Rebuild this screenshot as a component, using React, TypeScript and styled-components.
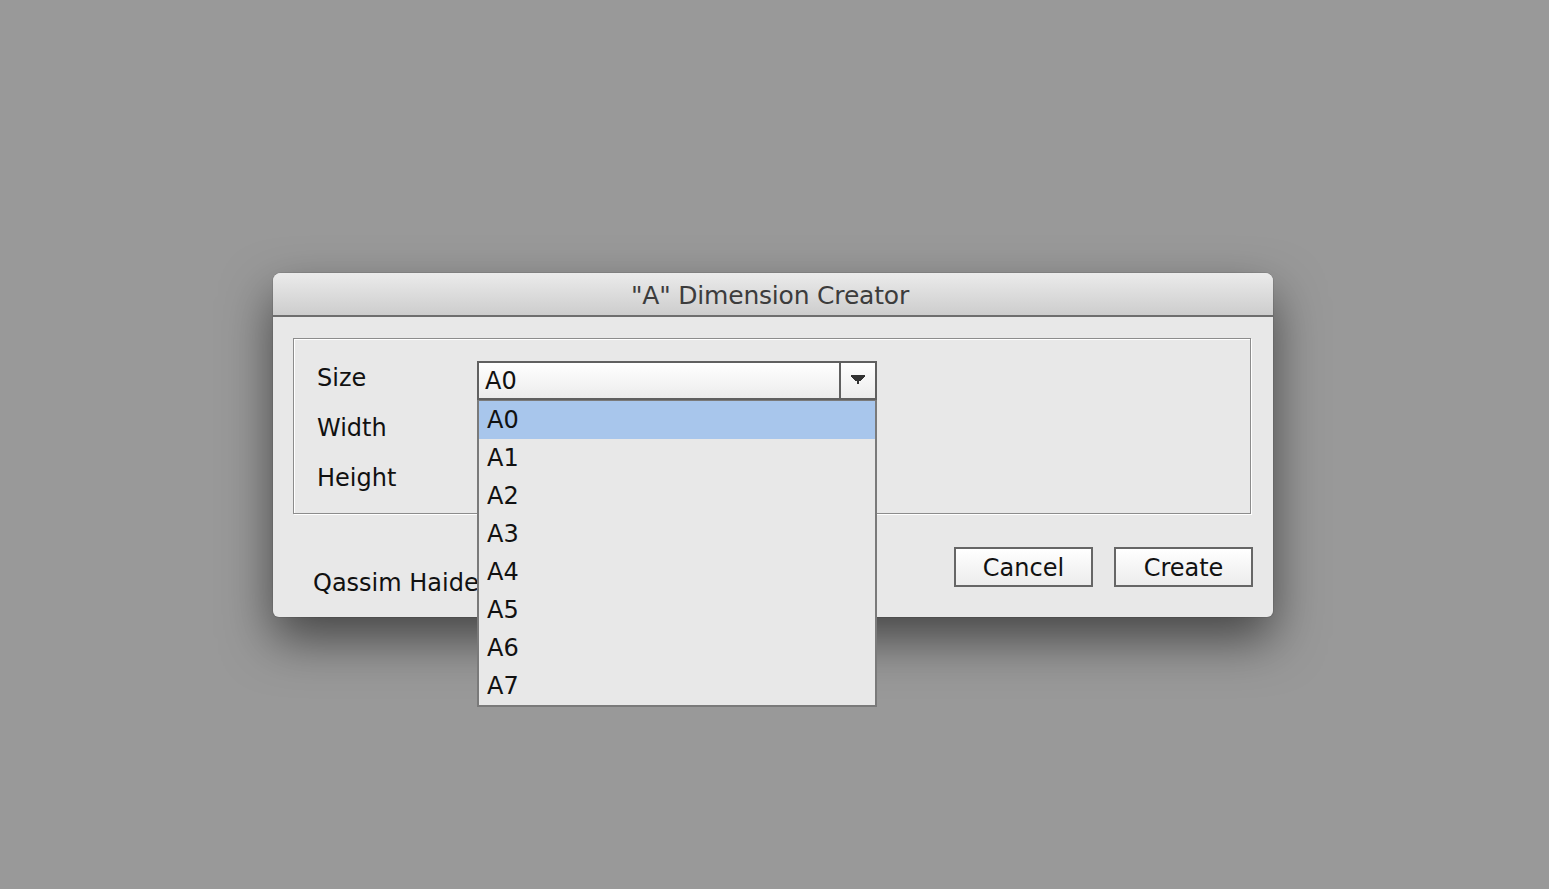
import { FC } from "react";
import styled, { createGlobalStyle } from "styled-components";

const GlobalStyle = createGlobalStyle`
  html, body {
    margin: 0;
    padding: 0;
    background: #999999;
    font-family: "DejaVu Sans", "Liberation Sans", sans-serif;
  }
`;

const sizes = ["A0", "A1", "A2", "A3", "A4", "A5", "A6", "A7"];

export const App: FC = () => {
  return (
    <Page>
      <GlobalStyle />
      <Dialog>
        <TitleBar>"A" Dimension Creator</TitleBar>
        <Body>
          <GroupBox>
            <FieldRow>
              <Label>Size</Label>
              <ComboWrap>
                <Combo>
                  <ComboValue>A0</ComboValue>
                  <ComboButton>
                    <svg width="14" height="9" viewBox="0 0 14 9">
                      <path
                        d="M0 0h14v2h-1v1h-1v1h-1v1h-1v1H8v3H6V6H4V5H3V4H2V3H1V2H0z"
                        fill="#333"
                      />
                    </svg>
                  </ComboButton>
                </Combo>
                <List>
                  {sizes.map((s, i) => (
                    <ListItem key={s} $selected={i === 0}>
                      {s}
                    </ListItem>
                  ))}
                </List>
              </ComboWrap>
            </FieldRow>
            <FieldRow>
              <Label>Width</Label>
            </FieldRow>
            <FieldRow>
              <Label>Height</Label>
            </FieldRow>
          </GroupBox>
          <Footer>
            <Author>Qassim Haider</Author>
            <Buttons>
              <Button>Cancel</Button>
              <Button>Create</Button>
            </Buttons>
          </Footer>
        </Body>
      </Dialog>
    </Page>
  );
};

export default App;

const Page = styled.div`
  width: 1549px;
  height: 889px;
  display: flex;
  justify-content: center;
  align-items: flex-start;
  padding-top: 273px;
  box-sizing: border-box;
`;

const Dialog = styled.div`
  width: 1000px;
  height: 344px;
  margin-right: 3px;
  background: #e8e8e8;
  border-radius: 8px 8px 6px 6px;
  box-shadow: 0 22px 50px rgba(0, 0, 0, 0.55), 0 0 0 1px rgba(0, 0, 0, 0.08);
  display: flex;
  flex-direction: column;
`;

const TitleBar = styled.div`
  height: 44px;
  box-sizing: border-box;
  padding-top: 2px;
  padding-right: 6px;
  border-radius: 8px 8px 0 0;
  background: linear-gradient(#ebebeb, #cdcdcd);
  border-bottom: 2px solid #6e6e6e;
  display: flex;
  align-items: center;
  justify-content: center;
  font-size: 25px;
  letter-spacing: -0.2px;
  color: #3c3c3c;
`;

const Body = styled.div`
  flex: 1;
  display: flex;
  flex-direction: column;
  padding: 21px 22px 0 20px;
`;

const GroupBox = styled.div`
  height: 176px;
  border: 1px solid #8c8c8c;
  box-shadow: inset 1px 1px 0 #ffffff, 1px 1px 0 #ffffff;
  padding: 22px 0 0 23px;
  box-sizing: border-box;
  display: flex;
  flex-direction: column;
`;

const FieldRow = styled.div`
  height: 50px;
  display: flex;
  align-items: flex-start;
`;

const Label = styled.div`
  width: 160px;
  font-size: 24px;
  color: #111;
  line-height: 32px;
  padding-top: 1px;
`;

const ComboWrap = styled.div`
  position: relative;
`;

const Combo = styled.div`
  width: 400px;
  height: 39px;
  box-sizing: border-box;
  border: 2px solid #606060;
  background: linear-gradient(#ffffff, #ececec);
  display: flex;
`;

const ComboValue = styled.div`
  flex: 1;
  font-size: 24px;
  color: #111;
  padding-left: 6px;
  line-height: 37px;
`;

const ComboButton = styled.div`
  width: 34px;
  border-left: 2px solid #606060;
  display: flex;
  align-items: center;
  justify-content: center;
  padding-bottom: 2px;
`;

const List = styled.div`
  position: absolute;
  top: 39px;
  left: 0;
  width: 400px;
  box-sizing: border-box;
  border: 2px solid #7a7a7a;
  border-top: 1px solid #7a7a7a;
  background: #e8e8e8;
  z-index: 5;
`;

const ListItem = styled.div<{ $selected: boolean }>`
  height: 38px;
  box-sizing: border-box;
  padding-top: 1px;
  line-height: 37px;
  font-size: 24px;
  color: #111;
  padding-left: 8px;
  background: ${(p) => (p.$selected ? "#a8c6ec" : "transparent")};
`;

const Footer = styled.div`
  display: flex;
  justify-content: space-between;
  align-items: flex-start;
  padding-top: 33px;
`;

const Author = styled.div`
  font-size: 24px;
  color: #111;
  padding-left: 20px;
  padding-top: 22px;
`;

const Buttons = styled.div`
  display: flex;
  gap: 21px;
  margin-right: -2px;
`;

const Button = styled.button`
  width: 139px;
  height: 40px;
  border: 2px solid #666;
  background: linear-gradient(#ffffff, #ececec);
  font-family: "DejaVu Sans", "Liberation Sans", sans-serif;
  font-size: 24px;
  color: #111;
  padding: 3px 0 0 0;
  line-height: 33px;
`;
